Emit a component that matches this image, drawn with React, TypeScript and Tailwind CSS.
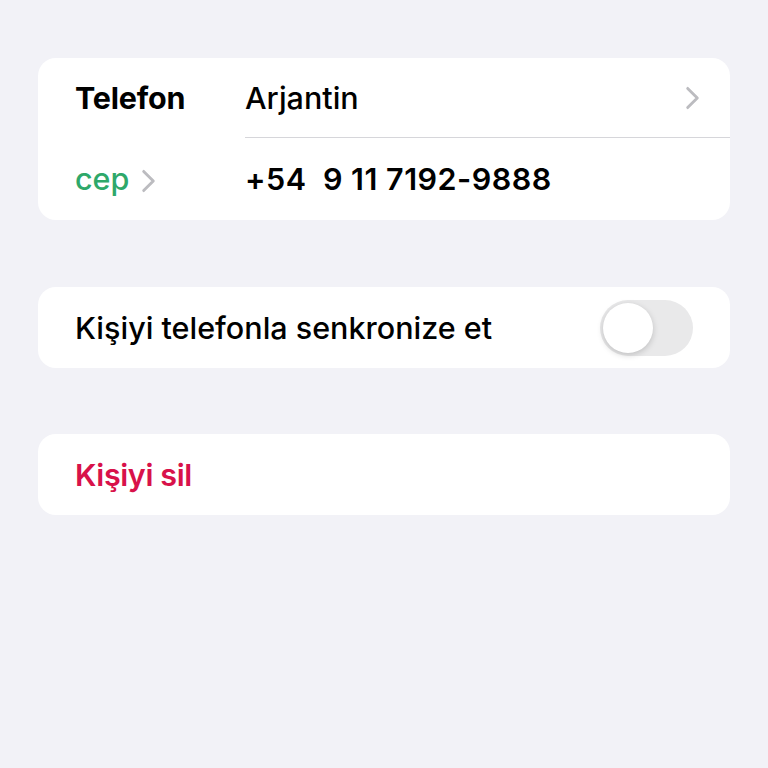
import { ReactNode } from "react";

function Card({ children }: { children: ReactNode }) {
  return <div className="mx-[38px] overflow-hidden rounded-[18px] bg-white">{children}</div>;
}

function Chevron({ className }: { className?: string }) {
  return (
    <svg viewBox="0 0 12 20" className={className} fill="none">
      <path d="M2 2l8 8-8 8" stroke="currentColor" strokeWidth="2.4" strokeLinecap="round" strokeLinejoin="round" />
    </svg>
  );
}

export default function App() {
  return (
    <div
      className="flex h-[768px] w-[768px] flex-col bg-[#f2f2f7] pt-[58px] text-black"
      style={{ fontFamily: "Inter, 'Noto Sans', sans-serif" }}
    >
      <Card>
        <div className="flex h-[80px] items-center">
          <span className="w-[207px] pl-[37px] text-[30.5px] font-bold tracking-[-0.2px]">Telefon</span>
          <div className="flex h-full flex-1 items-center justify-between border-b border-[#d6d6da] pr-[30px]">
            <span className="text-[30.5px] font-medium">Arjantin</span>
            <Chevron className="h-[24px] w-[15px] text-[#bcbcc0]" />
          </div>
        </div>
        <div className="flex h-[82px] items-center">
          <div className="flex w-[207px] items-center gap-[12px] pl-[37px]">
            <span className="text-[30.5px] font-medium text-[#2ea86a]">cep</span>
            <Chevron className="mt-1 h-[24px] w-[15px] text-[#bcbcc0]" />
          </div>
          <span className="text-[30.5px] font-semibold tracking-[0.5px] whitespace-pre">+54  9 11 7192-9888</span>
        </div>
      </Card>

      <div className="mt-[67px]">
        <Card>
          <div className="flex h-[81px] items-center justify-between pl-[37px] pr-[37px]">
            <span className="text-[30.5px] font-medium">Kişiyi telefonla senkronize et</span>
            <div className="flex h-[56px] w-[93px] items-center rounded-full bg-[#e9e9ea] p-[3px]">
              <div className="h-[50px] w-[50px] rounded-full bg-white shadow-[0_2px_6px_rgba(0,0,0,0.18)]" />
            </div>
          </div>
        </Card>
      </div>

      <div className="mt-[66px]">
        <Card>
          <div className="flex h-[81px] items-center pl-[37px]">
            <span className="text-[30.5px] font-semibold tracking-[-0.4px] text-[#d8124a]">Kişiyi sil</span>
          </div>
        </Card>
      </div>
    </div>
  );
}
